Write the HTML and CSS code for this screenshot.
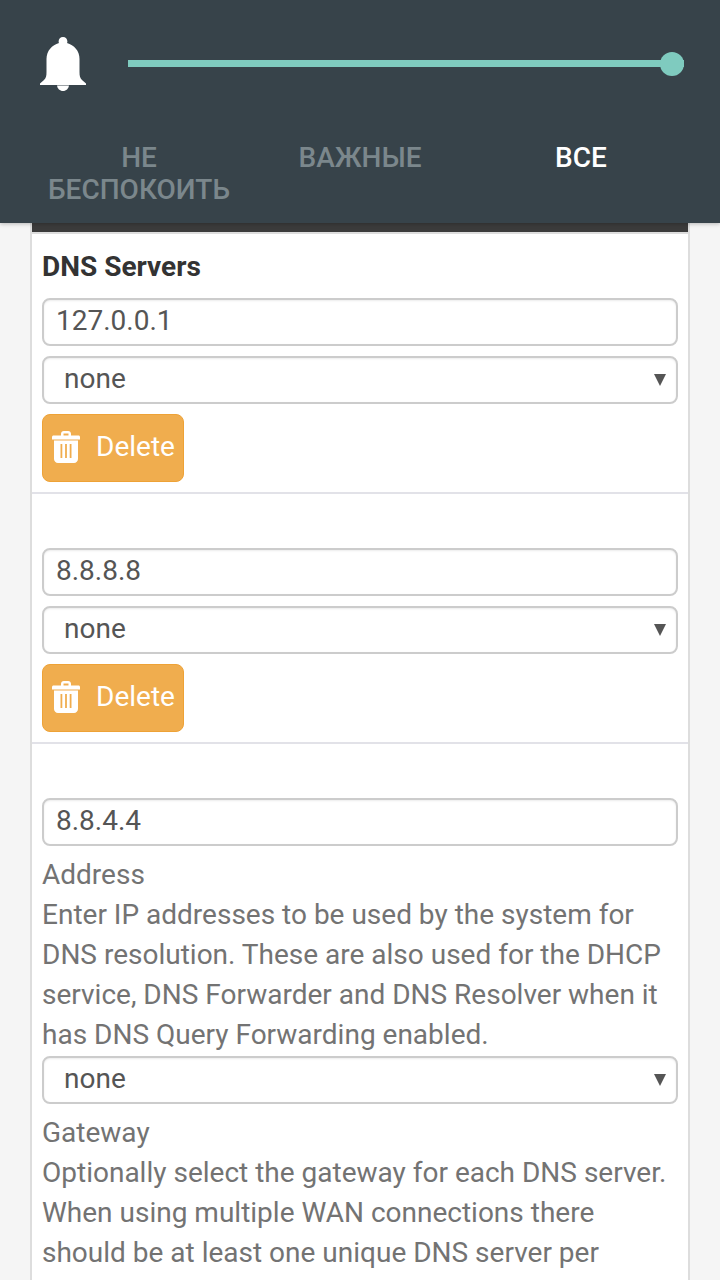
FILE: index.html
```html
<!DOCTYPE html>
<html lang="ru">
<head>
<meta charset="utf-8">
<title>DNS Servers</title>
<link rel="stylesheet" href="styles.css">
</head>
<body>
<header class="shade">
  <div class="volume">
    <svg class="bell" viewBox="0 0 46 54" width="46" height="54" aria-hidden="true">
      <path fill="#fff" d="M23 0c2.600 0 4.400 2 4.400 4.400 0 .8-.2 1.200-.4 1.700C34 8 39.500 14 39.500 22v13c0 4 .5 6 2.500 8l4 3.500V48H0v-1.500L4 43c2-2 2.500-4 2.500-8V22C6.500 14 12 8 19 6.100c-.2-.5-.4-.9-.4-1.700C18.600 2 20.400 0 23 0z"/>
      <path fill="#fff" d="M17 48.500h12c-.4 3-2.800 5.500-6 5.500s-5.600-2.500-6-5.500z"/>
    </svg>
    <div class="slider"><span class="thumb"></span></div>
  </div>
  <nav class="tabs">
    <span class="tab">Не беспокоить</span>
    <span class="tab">Важные</span>
    <span class="tab tab-active">Все</span>
  </nav>
</header>
<main class="panel">
  <section class="row">
    <div class="label label-title">DNS Servers</div>
    <div class="fields">
      <input class="control" type="text" value="127.0.0.1">
      <div class="select-wrap"><select class="control select"><option>none</option></select></div>
      <button class="btn" type="button">
        <svg class="trash" viewBox="0 0 28 32" width="28" height="32" aria-hidden="true">
          <path fill="#fff" fill-rule="evenodd" d="M9 4.500V2.800C9 1.200 10.200 0 11.800 0h4.400C17.800 0 19 1.200 19 2.800v1.700h7.500c.8 0 1.500.7 1.500 1.500v2.500H0V6c0-.8.700-1.500 1.500-1.500H9zm2.500 0h5V2.500h-5v2zM2 9.500h24V28c0 2.200-1.800 4-4 4H6c-2.200 0-4-1.800-4-4V9.500zm6.500 3.500v14h1.800V13H8.500zm4.600 0v14h1.800V13h-1.800zm4.600 0v14h1.800V13h-1.800z"/>
        </svg>
        <span class="btn-text">Delete</span>
      </button>
    </div>
  </section>
  <section class="row">
    <div class="label label-empty"></div>
    <div class="fields">
      <input class="control" type="text" value="8.8.8.8">
      <div class="select-wrap"><select class="control select"><option>none</option></select></div>
      <button class="btn" type="button">
        <svg class="trash" viewBox="0 0 28 32" width="28" height="32" aria-hidden="true">
          <path fill="#fff" fill-rule="evenodd" d="M9 4.500V2.800C9 1.200 10.200 0 11.800 0h4.400C17.800 0 19 1.200 19 2.800v1.700h7.500c.8 0 1.500.7 1.500 1.500v2.500H0V6c0-.8.700-1.500 1.500-1.500H9zm2.500 0h5V2.500h-5v2zM2 9.500h24V28c0 2.200-1.800 4-4 4H6c-2.200 0-4-1.800-4-4V9.500zm6.500 3.500v14h1.800V13H8.500zm4.600 0v14h1.800V13h-1.800zm4.600 0v14h1.800V13h-1.800z"/>
        </svg>
        <span class="btn-text">Delete</span>
      </button>
    </div>
  </section>
  <section class="row row-last">
    <div class="label label-empty"></div>
    <input class="control" type="text" value="8.8.4.4">
    <p class="help">Address<br>Enter IP addresses to be used by the system for DNS resolution. These are also used for the DHCP service, DNS Forwarder and DNS Resolver when it has DNS Query Forwarding enabled.</p>
    <div class="select-wrap"><select class="control select"><option>none</option></select></div>
    <p class="help">Gateway<br>Optionally select the gateway for each DNS server. When using multiple WAN connections there should be at least one unique DNS server per</p>
  </section>
</main>
</body>
</html>
```

FILE: styles.css
```css
* { box-sizing: border-box; }
html, body {
  margin: 0;
  height: 1280px;
  overflow: hidden;
  background: #f5f5f5;
  font-family: Roboto, "Noto Sans", sans-serif;
}
.shade {
  position: relative;
  z-index: 2;
  height: 223px;
  background: #37434a;
  box-shadow: 0 1px 4px rgba(0, 0, 0, .25);
  padding: 37px 36px 0 40px;
}
.volume {
  display: flex;
  align-items: flex-start;
  gap: 42px;
  height: 54px;
}
.bell { flex: none; display: block; }
.slider {
  position: relative;
  flex: 1;
  height: 7px;
  margin-top: 23px;
  background: #7fcbbf;
}
.thumb {
  position: absolute;
  right: 0;
  top: -8.500px;
  width: 24px;
  height: 24px;
  border-radius: 50%;
  background: #7fcbbf;
}
.tabs {
  display: grid;
  grid-template-columns: repeat(3, 221px);
  margin: 51px 0 0 -11.500px;
}
.tab {
  padding: 0 18px;
  text-align: center;
  text-transform: uppercase;
  font-size: 28px;
  font-weight: 500;
  line-height: 32px;
  color: #7b878c;
}
.tab-active { color: #fff; }
.panel {
  width: 660px;
  margin-left: 30px;
  background: #fff;
  border: 2px solid #ddd;
  border-top: 0;
}
.panel::before {
  content: "";
  display: block;
  box-sizing: border-box;
  height: 11px;
  background: #3b3b3b;
  border-bottom: 2px solid #ddd;
}
.row {
  padding: 10px;
  border-bottom: 2px solid #e2e2e8;
  height: 260px;
}
.row + .row { height: 250px; }
.row.row-last { height: auto; border-bottom: 0; }
.label-title {
  height: 54px;
  font-size: 28px;
  font-weight: 700;
  line-height: 46px;
  color: #333;
}
.label-empty { height: 44px; }
.fields {
  display: flex;
  flex-direction: column;
  align-items: flex-start;
  gap: 10px;
}
.control {
  display: block;
  width: 636px;
  height: 48px;
  margin: 0;
  padding: 0 12px 4px;
  background: #fff;
  border: 2px solid #ccc;
  border-radius: 8px;
  box-shadow: inset 0 1px 2px rgba(0, 0, 0, .08);
  font: 400 28px Roboto, "Noto Sans", sans-serif;
  color: #555;
  outline: 0;
}
.select-wrap { position: relative; width: 636px; }
.select-wrap::after {
  content: "";
  position: absolute;
  right: 12px;
  top: 18px;
  border-left: 6px solid transparent;
  border-right: 6px solid transparent;
  border-top: 12px solid #555;
}
.select {
  appearance: none;
  -webkit-appearance: none;
  padding-left: 20px;
}
.btn {
  display: flex;
  align-items: center;
  gap: 16px;
  width: 142px;
  height: 68px;
  padding: 0 0 0 9px;
  background: #f0ad4e;
  border: 1px solid #eea236;
  border-radius: 8px;
  font: 400 28px Roboto, "Noto Sans", sans-serif;
  color: #fff;
}
.btn-text { padding-bottom: 4px; }
.trash { flex: none; margin-bottom: 2px; }
.help {
  margin: 9px 0 1px;
  font-size: 28px;
  line-height: 40px;
  color: #737373;
}
```
